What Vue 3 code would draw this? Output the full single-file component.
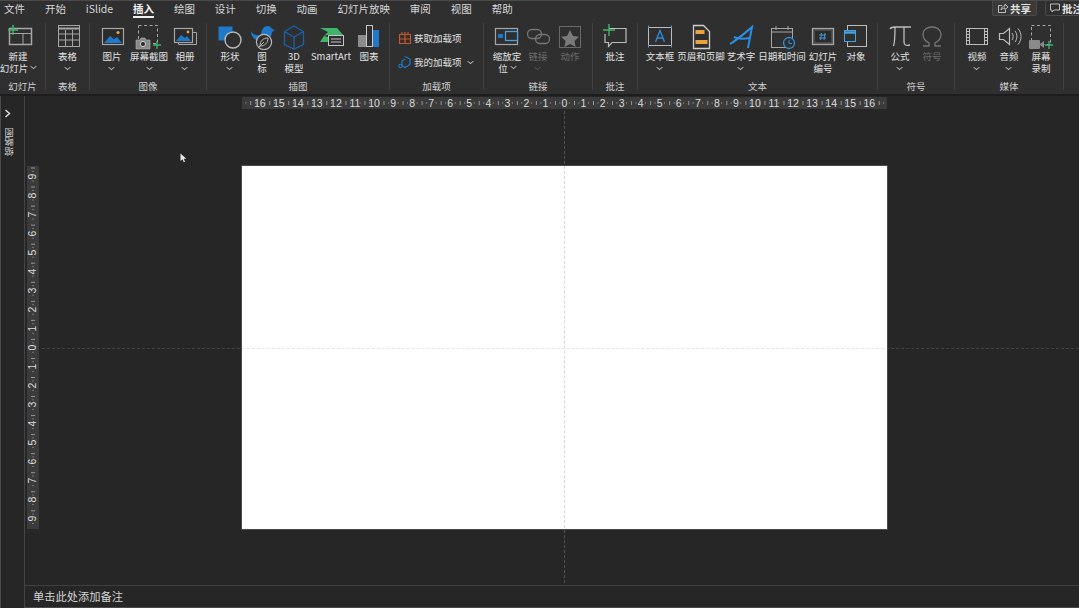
<script setup>
const tabs = ['文件', '开始', 'iSlide', '插入', '绘图', '设计', '切换', '动画', '幻灯片放映', '审阅', '视图', '帮助'];

const G = '#a6a6a6';
const B = '#1f78c8';
const GR = '#3fb56c';
const O = '#e8a33d';

const icons = {
  newSlide: `<rect x="9.5" y="6.5" width="22" height="16" fill="none" stroke="${G}" stroke-width="1.5"/><path d="M9 11.5h22M23 11.5v11" stroke="${G}" fill="none"/><path d="M13 3v10M8 8h10" stroke="${GR}" stroke-width="1.5"/>`,
  table: `<rect x="8.5" y="3.5" width="21" height="21" fill="none" stroke="${G}"/><path d="M8 6.5h22" stroke="${G}" stroke-width="2"/><path d="M8 12h22M8 18h22M15.5 8v16M22.5 8v16" stroke="${G}" fill="none"/>`,
  picture: `<rect x="8.5" y="6.5" width="21" height="16" fill="#2b2b2b" stroke="${G}" stroke-width="1.2"/><path d="M10 21l6-7 4 3 3-2 5 6z" fill="${B}"/><circle cx="24" cy="10.5" r="1.6" fill="${O}"/>`,
  shot: `<rect x="7.5" y="3.5" width="19" height="18" fill="none" stroke="${G}" stroke-dasharray="3 2.5"/><path d="M5 18h4l1-2h4l1 2h4v9H5z" fill="#8a8a8a" stroke="#b0b0b0" stroke-width=".6"/><circle cx="12" cy="22" r="2.6" fill="#2f2f2f" stroke="#d0d0d0"/><path d="M26 19v8M22 23h8" stroke="${GR}" stroke-width="1.3"/>`,
  album: `<path d="M26 10.5h3.5v12h-18v-3" fill="none" stroke="${G}"/><rect x="7.5" y="6.5" width="18" height="14" fill="#2b2b2b" stroke="${G}" stroke-width="1.2"/><path d="M9 19l5-6 4 3 2-2 4 5z" fill="${B}"/><circle cx="21" cy="10" r="1.4" fill="${O}"/>`,
  shape: `<rect x="6.5" y="4.5" width="14" height="14" fill="${B}"/><circle cx="21" cy="18" r="8" fill="#2f2f2f" stroke="#b8b8b8" stroke-width="1.4"/>`,
  bird: `<path d="M7 9c2 4 6 5 10 4 0-4 2-9 7-9 2 0 3 1 4 3l3 1-3 2c0 6-5 9-11 9-6 0-10-4-10-10z" fill="${B}"/><circle cx="20" cy="20" r="7.6" fill="#2f2f2f" stroke="#b8b8b8" stroke-width="1.2"/><path d="M16 24c0-5 3-8 8-8 0 5-3 8-8 8zM15 25l5-5" fill="none" stroke="#b8b8b8"/>`,
  cube: `<path d="M18 4l9.5 5.500v13L18 27l-9.500-4.500v-13zM8.500 9.500L18 15l9.500-5.500M18 15v12" fill="none" stroke="#1b62ad" stroke-width="1.300"/>`,
  smart: `<path d="M7 6h17l6 7H14l-3 1 4-4z" fill="${GR}"/><path d="M7 20h8v-5l-4-1z" fill="${GR}"/><rect x="15.500" y="13.500" width="15" height="10" fill="#2f2f2f" stroke="#c4c4c4"/><path d="M18 17h10M18 20h10" stroke="#c4c4c4"/>`,
  chart: `<rect x="7" y="13" width="8" height="12" fill="#8c8c8c"/><rect x="15.500" y="3.500" width="6" height="21" fill="#2f2f2f" stroke="#c8c8c8"/><rect x="22" y="8" width="6" height="17" fill="${B}"/>`,
  zoom: `<rect x="6.500" y="6.500" width="22" height="16" fill="none" stroke="${G}" stroke-width="1.200"/><rect x="9" y="12" width="5" height="4" fill="${B}"/><rect x="16.500" y="9.500" width="12" height="9" fill="#2f2f2f" stroke="#4a9fe0" stroke-width="1.300"/>`,
  link: `<rect x="7.500" y="7.500" width="14" height="9" rx="4.500" fill="none" stroke="#767676" stroke-width="1.300"/><rect x="15.500" y="12.500" width="14" height="9" rx="4.500" fill="none" stroke="#767676" stroke-width="1.300"/>`,
  action: `<rect x="7.500" y="4.500" width="21" height="21" fill="none" stroke="#696969"/><path d="M18 8l3 6 6 .8-4.500 4.200 1.200 6-5.700-3-5.700 3 1.200-6-4.500-4.200 6-.8z" fill="#7a7a7a"/>`,
  comment: `<path d="M12 6.500h17v14H15l-3.500 4v-4H8V12" fill="none" stroke="#bdbdbd" stroke-width="1.200"/><path d="M12 2v12M6 8h12" stroke="${GR}" stroke-width="1.400"/>`,
  textbox: `<rect x="6.500" y="5.500" width="23" height="18" fill="none" stroke="#bdbdbd"/><path d="M6 5h1M30 5h-1M6 24h1M30 24h-1" stroke="#4a9fe0" stroke-width="3"/><path d="M13.500 20L18 8.500 22.500 20M15 16h6" fill="none" stroke="#2f8ddb" stroke-width="1.300"/>`,
  header: `<path d="M10.500 3.500h10l6 6v17h-16z" fill="none" stroke="#cfcfcf" stroke-width="1.300"/><rect x="12.500" y="8" width="9" height="4" fill="${O}"/><rect x="12.500" y="18" width="12" height="4" fill="${O}"/>`,
  wordart: `<path d="M7 22C14 18 22 11 29 5L25 26M11 15c5 2 10 2 15 1" fill="none" stroke="#2a8de0" stroke-width="2"/>`,
  date: `<rect x="7.500" y="6.500" width="21" height="19" fill="none" stroke="${G}"/><path d="M7 10h21M12 4v4M24 4v4" stroke="${G}" fill="none"/><circle cx="25" cy="21" r="5.500" fill="#2f2f2f" stroke="#2f8ddb" stroke-width="1.300"/><path d="M25 18v3.500h3" fill="none" stroke="#2f8ddb"/>`,
  slideNo: `<rect x="7.500" y="6.500" width="21" height="16" fill="#4a4a4a" stroke="${G}" stroke-width="1.300"/><rect x="10" y="9" width="16" height="11" fill="#2b2b2b"/><path d="M16.500 11l-1 7M20 11l-1 7M14 13h7M14 16h7" stroke="#4a9fe0" stroke-width=".9"/>`,
  object: `<rect x="9.500" y="3.500" width="19" height="21" fill="none" stroke="#bdbdbd"/><rect x="6.500" y="8.500" width="11" height="11" fill="#2f2f2f" stroke="#4a9fe0"/><path d="M6 10.500h12" stroke="#4a9fe0" stroke-width="2.500"/>`,
  pi: `<path d="M8 7c1-2 3-2 5-2h16M13 5c0 8 0 15-1.500 19M22 5v15c0 3 2 4 6 3" fill="none" stroke="#bdbdbd" stroke-width="1.300"/>`,
  omega: `<path d="M9 24h6v-3c-4-2-6-5-6-8.500C9 8 13 5 18 5s9 3 9 7.500c0 3.500-2 6.500-6 8.500v3h6" fill="none" stroke="#767676" stroke-width="1.300"/>`,
  video: `<rect x="7.500" y="6.500" width="21" height="16" fill="none" stroke="#bdbdbd"/><path d="M7.500 9.500h3M7.500 12.500h3M7.500 15.500h3M7.500 18.500h3M25.500 9.500h3M25.500 12.500h3M25.500 15.500h3M25.500 18.500h3M10.500 6v17M25.500 6v17" stroke="#bdbdbd" fill="none"/>`,
  audio: `<path d="M8.500 11.500h4l6-5v16l-6-5h-4z" fill="none" stroke="#bdbdbd" stroke-width="1.200"/><path d="M21 11c1.500 2 1.500 5 0 7M24 9c2.500 3 2.500 8 0 11M27 6.500c4 4.500 4 11.500 0 16" fill="none" stroke="#bdbdbd"/>`,
  record: `<rect x="8.500" y="3.500" width="19" height="19" fill="none" stroke="${G}" stroke-dasharray="3 2.500"/><rect x="6" y="18" width="11" height="9" rx="1" fill="#8a8a8a"/><path d="M17 22l4-3v7l-4-3z" fill="#8a8a8a"/><path d="M26 19v8M22 23h8" stroke="${GR}" stroke-width="1.300"/>`,
};

const groups = [
  { label: '幻灯片', width: 46, pad: 0, items: [{ w: 36, icon: 'newSlide', lines: ['新建', '幻灯片'], inline: true }] },
  { label: '表格', width: 44, pad: 0, items: [{ w: 43, icon: 'table', lines: ['表格'], caret: true }] },
  { label: '图像', width: 117, pad: 4, items: [
    { w: 36, icon: 'picture', lines: ['图片'], caret: true },
    { w: 38, icon: 'shot', lines: ['屏幕截图'], caret: true },
    { w: 34, icon: 'album', lines: ['相册'], caret: true },
  ] },
  { label: '插图', width: 183, pad: 7, items: [
    { w: 32, icon: 'shape', lines: ['形状'], caret: true },
    { w: 32, icon: 'bird', lines: ['图', '标'] },
    { w: 32, icon: 'cube', lines: ['3D', '模型'] },
    { w: 42, icon: 'smart', lines: ['SmartArt'] },
    { w: 34, icon: 'chart', lines: ['图表'] },
  ] },
  { label: '加载项', width: 94, addins: true, items: [] },
  { label: '链接', width: 109, pad: 7, items: [
    { w: 32, icon: 'zoom', lines: ['缩放定', '位'], inline: true },
    { w: 30, icon: 'link', lines: ['链接'], caret: true, off: true },
    { w: 34, icon: 'action', lines: ['动作'], off: true },
  ] },
  { label: '批注', width: 45, pad: 0, items: [{ w: 44, icon: 'comment', lines: ['批注'] }] },
  { label: '文本', width: 240, pad: 2, items: [
    { w: 40, icon: 'textbox', lines: ['文本框'], caret: true },
    { w: 42, icon: 'header', lines: ['页眉和页脚'] },
    { w: 38, icon: 'wordart', lines: ['艺术字'], caret: true },
    { w: 44, icon: 'date', lines: ['日期和时间'] },
    { w: 38, icon: 'slideNo', lines: ['幻灯片', '编号'] },
    { w: 28, icon: 'object', lines: ['对象'] },
  ] },
  { label: '符号', width: 77, pad: 6, items: [
    { w: 32, icon: 'pi', lines: ['公式'], caret: true },
    { w: 32, icon: 'omega', lines: ['符号'], off: true },
  ] },
  { label: '媒体', width: 109, pad: 6, items: [
    { w: 32, icon: 'video', lines: ['视频'], caret: true },
    { w: 32, icon: 'audio', lines: ['音频'], caret: true },
    { w: 32, icon: 'record', lines: ['屏幕', '录制'] },
  ] },
];

const hRuler = [];
for (let i = -16; i <= 16; i++) hRuler.push(Math.abs(i));
const vRuler = [];
for (let i = -9; i <= 9; i++) vRuler.push(Math.abs(i));
</script>

<template>
  <div class="app">
    <header class="tabs">
      <span v-for="t in tabs" :key="t" :class="['tab', { 'tab--on': t === '插入' }]">{{ t }}</span>
      <div class="tab-actions">
        <button class="pill pill--share">
          <svg width="11" height="11" viewBox="0 0 11 11"><path d="M5 2.500H1.500v7h7V7M4 7c0-2.500 2-4 4-4V1l3 3-3 2.500V5C6 5 5 6 4 7z" fill="none" stroke="#ccc" stroke-width=".9"/></svg>
          共享
        </button>
        <button class="pill pill--note">
          <svg width="10" height="10" viewBox="0 0 10 10"><path d="M.5 1h9v6H4L2 9V7H.5z" fill="none" stroke="#ccc" stroke-width=".9"/></svg>
          批注
        </button>
      </div>
    </header>

    <section class="ribbon">
      <div v-for="g in groups" :key="g.label" class="group" :style="{ width: g.width + 'px' }">
        <div v-if="g.addins" class="addins">
          <div class="addin">
            <svg width="14" height="14" viewBox="0 0 14 14"><path d="M1.500 3.500h11v9h-11zM7 1v11.500M1.500 8h11M4 1v2.500M10 1v2.500" fill="none" stroke="#c8552b" stroke-width="1.200"/></svg>
            <span>获取加载项</span>
          </div>
          <div class="addin">
            <svg width="14" height="14" viewBox="0 0 14 14"><path d="M7 1.500l5 2.500v5.500l-5 3-3-2V6L7 4" fill="none" stroke="#1f78c8" stroke-width="1.200"/><circle cx="2.500" cy="11" r="1.700" fill="none" stroke="#1f78c8" stroke-width="1.100"/></svg>
            <span>我的加载项</span>
            <i class="caret caret--addin"></i>
          </div>
        </div>
        <div v-else class="items" :style="{ paddingLeft: g.pad + 'px' }">
          <div
            v-for="item in g.items"
            :key="item.icon"
            :class="['item', { 'item--off': item.off }]"
            :style="{ width: item.w + 'px' }"
          >
            <svg class="item-icon" width="36" height="28" viewBox="0 0 36 28" v-html="icons[item.icon]"></svg>
            <div class="item-text">
              <span v-for="(line, i) in item.lines" :key="line" class="line">
                {{ line }}<i v-if="item.inline && i === item.lines.length - 1" class="caret caret--inline"></i>
              </span>
              <i v-if="item.caret" class="caret"></i>
            </div>
          </div>
        </div>
        <div class="group-label">{{ g.label }}</div>
      </div>
    </section>

    <main class="body">
      <aside class="thumbs">
        <svg width="7" height="9" viewBox="0 0 7 9"><path d="M1.500 1L5.500 4.500 1.500 8" fill="none" stroke="#ddd" stroke-width="1.500"/></svg>
        <span class="thumbs-label">缩略图</span>
      </aside>
      <div class="workspace">
        <div class="canvas">
          <div class="ruler ruler--h">
            <span v-for="(n, i) in hRuler" :key="i" class="mark">{{ n }}</span>
          </div>
          <div class="ruler ruler--v">
            <span v-for="(n, i) in vRuler" :key="i" class="mark mark--v">{{ n }}</span>
          </div>
          <div class="slide"></div>
          <div class="guide guide--v"></div>
          <div class="guide guide--h"></div>
          <svg class="pointer" width="7" height="10" viewBox="0 0 7 10"><path d="M.5.500v7.500l2-1.700 1.300 3 1.200-.5-1.200-3h2.500z" fill="#e8e8e8"/></svg>
        </div>
        <footer class="notes">单击此处添加备注</footer>
      </div>
    </main>
  </div>
</template>

<style>
html, body { margin: 0; background: #262626; }
</style>

<style scoped>
.app {
  width: 1079px;
  height: 608px;
  overflow: hidden;
  display: flex;
  flex-direction: column;
  font-family: "Noto Sans CJK SC", "Liberation Sans", sans-serif;
  color: #e2e2e2;
  background: #262626;
}
.tabs {
  height: 18px;
  flex: none;
  display: flex;
  align-items: flex-start;
  gap: 19.9px;
  padding-left: 4px;
  background: #2f2f2f;
  border-top: 1px solid #4a4a4a;
  box-sizing: border-box;
}
.tab {
  font-size: 10.5px;
  line-height: 15px;
  color: #d8d8d8;
  white-space: nowrap;
}
.tab--on {
  font-weight: 700;
  color: #f2f2f2;
  height: 17px;
  box-sizing: border-box;
  border-bottom: 2px solid #f2f2f2;
}
.tab-actions {
  margin-left: auto;
  display: flex;
  gap: 8px;
}
.pill {
  height: 16px;
  margin-top: -1px;
  padding: 0 4px;
  display: flex;
  align-items: center;
  gap: 2px;
  white-space: nowrap;
  font: 700 10.5px "Noto Sans CJK SC", sans-serif;
  color: #e2e2e2;
  background: #3a3a3a;
  border: 1px solid #4a4a4a;
  border-radius: 2px;
}
.pill--share { width: 45px; }
.pill--note { width: 45px; margin-right: -11px; background: #2f2f2f; }

.ribbon {
  height: 76px;
  flex: none;
  display: flex;
  background: #2f2f2f;
  border-bottom: 2px solid #1d1d1d;
  box-sizing: content-box;
}
.group {
  flex: none;
  height: 67px;
  margin-top: 5px;
  box-sizing: border-box;
  border-right: 1px solid #414141;
  display: flex;
  flex-direction: column;
}
.items {
  flex: 1;
  display: flex;
  min-height: 0;
}
.item {
  flex: none;
  display: flex;
  flex-direction: column;
  align-items: center;
}
.item-icon {
  flex: none;
  margin-top: -1px;
}
.item-text {
  display: flex;
  flex-direction: column;
  align-items: center;
  margin-top: 0;
  font-size: 9.5px;
  line-height: 12px;
  white-space: nowrap;
}
.line { display: block; }
.item--off { color: #6c6c6c; }
.caret {
  display: block;
  width: 4px;
  height: 4px;
  margin-top: 3px;
  border-right: 1px solid #c8c8c8;
  border-bottom: 1px solid #c8c8c8;
  transform: scale(.9, .7) rotate(45deg);
}
.item--off .caret { border-color: #5c5c5c; }
.caret--inline {
  display: inline-block;
  margin: 0 0 3px 3px;
}
.caret--addin {
  margin: 0 0 2px 0;
  position: relative;
  left: 4px;
}
.group-label {
  height: 14px;
  flex: none;
  margin-bottom: -3px;
  text-align: center;
  font-size: 9.5px;
  line-height: 14px;
  color: #d0d0d0;
}
.addins {
  flex: 1;
  min-height: 0;
  display: flex;
  flex-direction: column;
  gap: 10px;
  padding: 8px 0 0 8px;
}
.addin {
  display: flex;
  align-items: center;
  gap: 2px;
  height: 14px;
  font-size: 9.5px;
  white-space: nowrap;
}

.body {
  flex: 1;
  display: flex;
  min-height: 0;
}
.thumbs {
  width: 25px;
  flex: none;
  box-sizing: border-box;
  border-left: 1px solid #4a4a4a;
  border-right: 1px solid #444;
  padding: 13px 0 0 3px;
  display: flex;
  flex-direction: column;
  align-items: flex-start;
  gap: 10px;
}
.thumbs-label {
  writing-mode: vertical-rl;
  transform: rotate(180deg);
  font-size: 9.3px;
  line-height: 10px;
  color: #cfcfcf;
}
.workspace {
  flex: 1;
  display: flex;
  flex-direction: column;
  min-width: 0;
}
.canvas {
  position: relative;
  flex: 1;
  display: grid;
  grid-template-columns: 2px 12px 203px 645px 1fr;
  grid-template-rows: 1px 12px 57px 363px 1fr;
}
.slide {
  grid-column: 4;
  grid-row: 4;
  background: #fff;
  box-shadow: 0 0 0 1px #4a4a4a;
}
.ruler {
  display: flex;
  justify-content: center;
  align-items: center;
  background-color: #3b3b3b;
  color: #dcdcdc;
  font: 10.5px "Liberation Sans", sans-serif;
}
.ruler--h {
  grid-column: 4;
  grid-row: 2;
  background-image: linear-gradient(90deg, #9a9a9a 1px, transparent 1px), linear-gradient(90deg, #777 1px, transparent 1px);
  background-size: 19.05px 4px, 9.525px 2px;
  background-position: 8.2px 4px, 3.4px 5px;
  background-repeat: repeat-x;
}
.ruler--v {
  grid-column: 2;
  grid-row: 4;
  flex-direction: column;
  background-image: linear-gradient(#9a9a9a 1px, transparent 1px), linear-gradient(#777 1px, transparent 1px);
  background-size: 4px 19.05px, 2px 9.525px;
  background-position: 4px 1.5px, 5px 5px;
  background-repeat: repeat-y;
}
.mark {
  flex: none;
  width: 19.05px;
  text-align: center;
  line-height: 12px;
}
.mark--v {
  width: 12px;
  height: 19.05px;
  line-height: 19.05px;
  transform: rotate(-90deg);
}
.guide {
  position: absolute;
}
.guide--v {
  left: 539px;
  top: 15px;
  bottom: 2px;
  border-left: 1px dashed rgba(150, 150, 150, .4);
}
.guide--h {
  left: 17px;
  right: 0;
  top: 252px;
  border-top: 1px dashed rgba(150, 150, 150, .25);
}
.pointer {
  position: absolute;
  left: 155px;
  top: 57px;
}
.notes {
  height: 23px;
  flex: none;
  box-sizing: border-box;
  border-top: 1px solid #3f3f3f;
  border-bottom: 1px solid #4a4a4a;
  padding-left: 8px;
  font-size: 11.25px;
  line-height: 21px;
  color: #d4d4d4;
}
</style>
